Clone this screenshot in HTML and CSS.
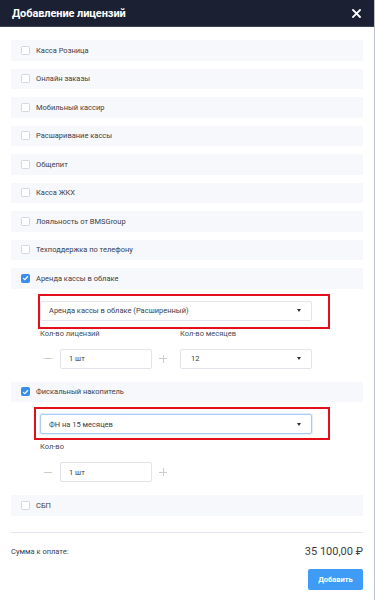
FILE: index.html
```html
<!DOCTYPE html>
<html lang="ru">
<head>
<meta charset="utf-8">
<link rel="stylesheet" href="styles.css">
</head>
<body>
<div class="modal">
  <div class="header">
    <span class="title">Добавление лицензий</span>
    <svg class="close" width="9" height="9" viewBox="0 0 9 9"><path d="M1 1L8 8M8 1L1 8" stroke="#fff" stroke-width="1.8" stroke-linecap="square"/></svg>
  </div>
  <div class="content">
    <div class="opt"><span class="cb"></span><span>Касса Розница</span></div>
    <div class="opt"><span class="cb"></span><span>Онлайн заказы</span></div>
    <div class="opt"><span class="cb"></span><span>Мобильный кассир</span></div>
    <div class="opt"><span class="cb"></span><span>Расшаривание кассы</span></div>
    <div class="opt"><span class="cb"></span><span>Общепит</span></div>
    <div class="opt"><span class="cb"></span><span>Касса ЖКХ</span></div>
    <div class="opt"><span class="cb"></span><span>Лояльность от BMSGroup</span></div>
    <div class="opt"><span class="cb"></span><span>Техподдержка по телефону</span></div>
    <div class="opt"><span class="cb on"><svg width="8" height="8" viewBox="0 0 8 8"><path d="M1.3 4.2L3.2 6L6.8 2" fill="none" stroke="#fff" stroke-width="1.3"/></svg></span><span>Аренда кассы в облаке</span></div>
    <div class="sub">
      <div class="select mark1"><span>Аренда кассы в облаке (Расширенный)</span><i class="caret"></i></div>
      <div class="pair">
        <div class="field">
          <div class="lbl">Кол-во лицензий</div>
          <div class="stepper">
            <span class="minus"></span>
            <div class="input">1 шт</div>
            <span class="plus"></span>
          </div>
        </div>
        <div class="field">
          <div class="lbl">Кол-во месяцев</div>
          <div class="select small"><span>12</span><i class="caret"></i></div>
        </div>
      </div>
    </div>
    <div class="opt"><span class="cb on"><svg width="8" height="8" viewBox="0 0 8 8"><path d="M1.3 4.2L3.2 6L6.8 2" fill="none" stroke="#fff" stroke-width="1.3"/></svg></span><span>Фискальный накопитель</span></div>
    <div class="sub">
      <div class="select focus mark2"><span>ФН на 15 месяцев</span><i class="caret"></i></div>
      <div class="field">
        <div class="lbl">Кол-во</div>
        <div class="stepper">
          <span class="minus"></span>
          <div class="input">1 шт</div>
          <span class="plus"></span>
        </div>
      </div>
    </div>
    <div class="opt"><span class="cb"></span><span>СБП</span></div>
    <div class="divider"></div>
    <div class="total">
      <span class="tl">Сумма к оплате:</span>
      <span class="tv">35 100,00 ₽</span>
    </div>
    <div class="actions"><button class="btn">Добавить</button></div>
  </div>
</div>
</body>
</html>
```
FILE: styles.css
```css
* { box-sizing: border-box; }
html, body { margin: 0; padding: 0; background: #fff; }
body { font-family: Roboto, "Noto Sans", Arial, sans-serif; color: #3a3d44; }
.modal { width: 375px; height: 600px; border-right: 1px solid #b9bec8; overflow: hidden; }
.header {
  height: 27px; background: #1b2133; border-bottom: 1px solid #3b4356;
  display: flex; align-items: center; justify-content: space-between;
  padding: 0 13px 0 12px;
}
.title { color: #fff; font-weight: 700; font-size: 11px; letter-spacing: -0.1px; }
.close { display: block; }
.content { padding: 13px 11px 0 11px; }
.opt {
  height: 20.5px; background: #f7f8fb; margin-bottom: 8px;
  display: flex; align-items: center; gap: 6px; padding-left: 10px;
  font-size: 7.5px; color: #3d4047;
}
.cb {
  width: 9px; height: 9px; border: 1px solid #d3d7de; border-radius: 1.5px; background: #fff;
  display: flex; align-items: center; justify-content: center;
}
.cb.on { background: #3b8ded; border-color: #3b8ded; }
.sub { padding: 6px 0 0 29px; margin-bottom: 13px; margin-top: -2px; }
.select {
  position: relative; width: 272px; height: 20px; border: 1px solid #e1e4ea; border-radius: 2px;
  display: flex; align-items: center; justify-content: space-between;
  padding: 0 8px 0 8px; font-size: 7.5px; color: #3d4047; background: #fff;
}
.select.focus { border-color: #a9cdf3; box-shadow: 0 0 0 1px #e3effc; }
.select.small { width: 132px; padding-left: 10px; }
.caret { width: 0; height: 0; border-left: 2.5px solid transparent; border-right: 2.5px solid transparent; border-top: 3px solid #2e3138; margin-right: 2px; }
.mark1::after, .mark2::after {
  content: ""; position: absolute; border: 2px solid #e3101c; pointer-events: none;
}
.mark1::after { top: -8px; left: -3px; right: -19px; bottom: -9px; }
.mark2::after { top: -8px; left: -7px; right: -19px; bottom: -7px; }
.pair { display: flex; gap: 8px; }
.lbl { font-size: 7.5px; color: #4a4d54; height: 28px; padding-top: 8px; }
.stepper { display: flex; align-items: center; height: 20px; }
.minus, .plus { position: relative; width: 20px; height: 20px; }
.minus::before, .plus::before, .plus::after {
  content: ""; position: absolute; background: #c9ccd3;
}
.minus::before { left: 4px; top: 9.5px; width: 8px; height: 1px; }
.plus::before { left: 7px; top: 9.5px; width: 8px; height: 1px; }
.plus::after { left: 10.5px; top: 6px; width: 1px; height: 8px; }
.input {
  width: 92px; height: 20px; border: 1px solid #e1e4ea; border-radius: 2px;
  display: flex; align-items: center; padding-left: 8px; font-size: 7.5px; color: #3d4047;
}
.divider { height: 1px; background: #dfe2ea; margin-top: 16px; }
.total { display: flex; justify-content: space-between; align-items: center; height: 20px; margin-top: 9px; }
.tl { font-size: 7.5px; color: #3d4047; }
.tv { font-size: 11px; color: #3a3d44; }
.actions { display: flex; justify-content: flex-end; margin-top: 7px; }
.btn {
  width: 55px; height: 21px; border: none; border-radius: 2px; background: #3e9cf6;
  color: #fff; font-family: Roboto, Arial, sans-serif; font-weight: 700; font-size: 7.5px; padding: 0;
}
```
